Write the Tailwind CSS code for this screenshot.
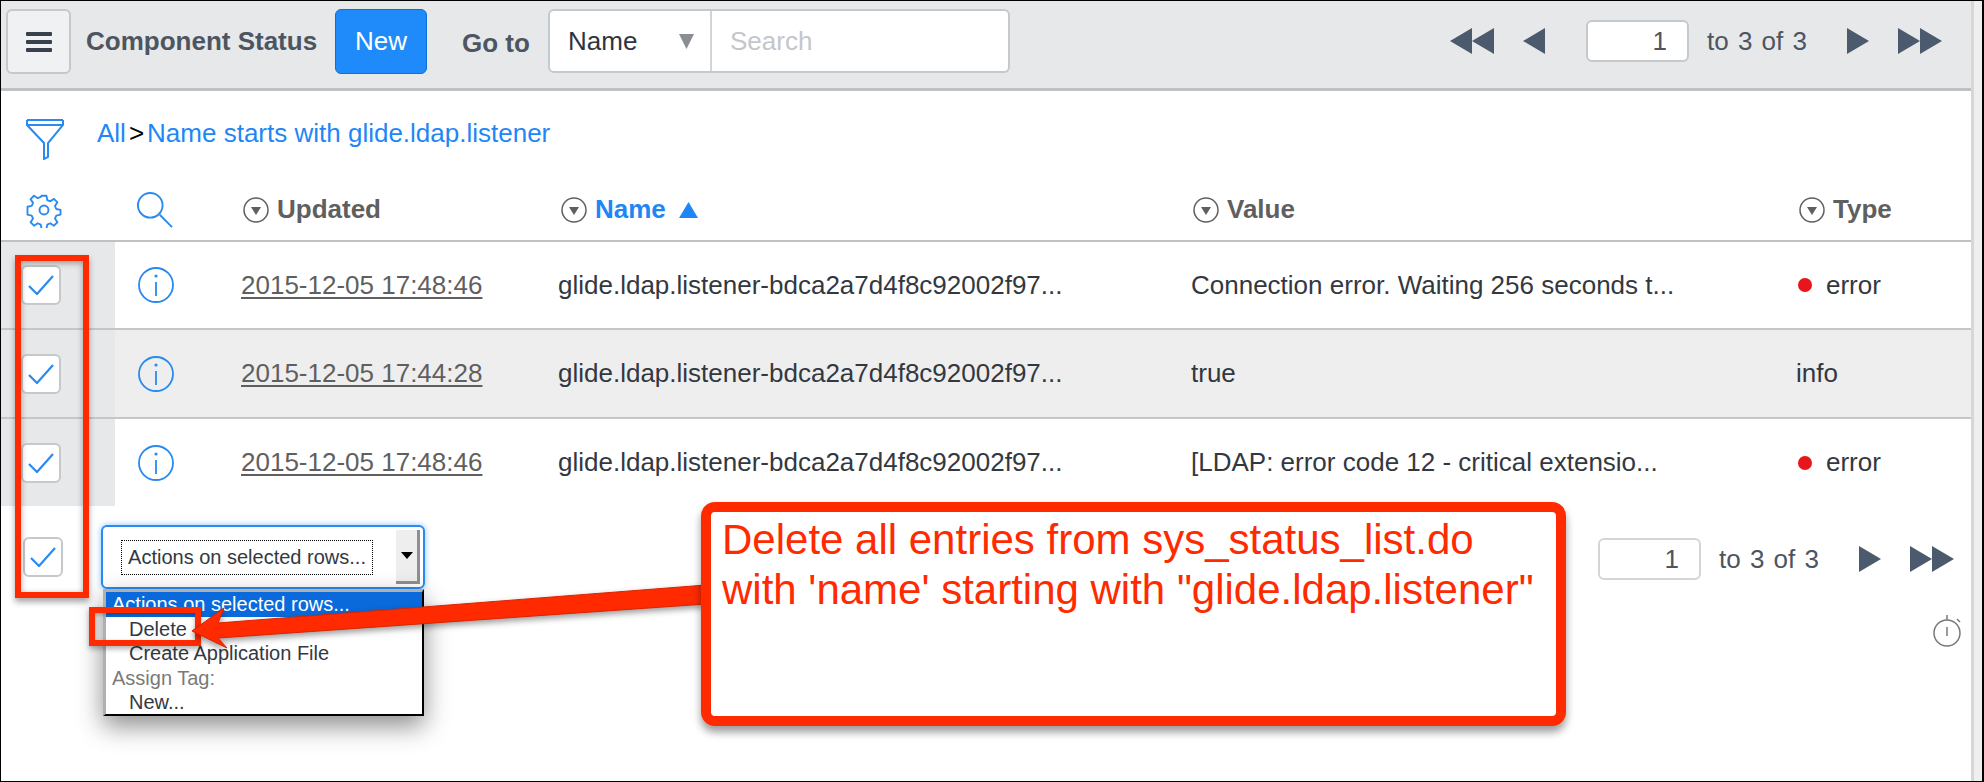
<!DOCTYPE html>
<html lang="en">
<head>
    <meta charset="UTF-8" />
    <title>Component Status</title>
    <script src="https://cdn.jsdelivr.net/npm/@tailwindcss/browser@4"></script>
</head>
<body class="bg-white font-['Liberation_Sans',Arial,sans-serif]">
<div class="relative w-[1984px] h-[782px] overflow-hidden border-t border-l border-b border-black flex">
    <main class="w-[1970px] shrink-0">
        <!-- Toolbar -->
        <header class="h-[90px] bg-[#e6e8ea] border-b-[3px] border-[#bfc2c5] flex items-start text-[#4d5561]">
            <button class="ml-[5px] mt-[8px] w-[65px] h-[65px] bg-[#f0f1f2] border-2 border-[#c6c9cc] rounded-md flex items-center justify-center">
                <svg width="26" height="20" viewBox="0 0 26 20" fill="#39414d"><rect width="26" height="4" rx="1"/><rect y="8" width="26" height="4" rx="1"/><rect y="16" width="26" height="4" rx="1"/></svg>
            </button>
            <h1 class="ml-[15px] mt-[25px] text-[26px] leading-[30px] font-bold whitespace-nowrap w-[249px]">Component Status</h1>
            <button class="mt-[8px] w-[92px] h-[65px] bg-[#1f8bfa] border border-[#0c6fd6] rounded-md text-white text-[26px]">New</button>
            <span class="ml-[35px] mt-[27px] text-[26px] leading-[30px] font-bold w-[86px]">Go to</span>
            <div class="mt-[8px] w-[462px] h-[64px] bg-white border-2 border-[#c6c9cc] rounded-md flex">
                <div class="w-[162px] flex items-center justify-between pl-[18px] pr-[16px] border-r-2 border-[#d2d4d7] text-[26px] text-[#2e3540]">
                    Name
                    <svg width="15" height="15" viewBox="0 0 15 15" fill="#8a8d91"><path d="M0 0H15L7.500 15Z"/></svg>
                </div>
                <div class="pl-[18px] flex items-center text-[26px] text-[#c3c6ca]">Search</div>
            </div>
            <div class="ml-auto flex items-center mt-[19px] mr-[29px]">
                <svg width="44" height="26" viewBox="0 0 44 26" fill="#4b5a6c"><path d="M22 0V26L0 13Z"/><path d="M44 0V26L22 13Z"/></svg>
                <svg class="ml-[29px]" width="22" height="26" viewBox="0 0 22 26" fill="#4b5a6c"><path d="M22 0V26L0 13Z"/></svg>
                <div class="ml-[41px] w-[103px] h-[42px] bg-white border-2 border-[#c6c9cc] rounded-md text-right pr-[20px] leading-[38px] text-[26px] text-[#4d5561]">1</div>
                <span class="ml-[18px] w-[140px] text-[26px] [word-spacing:2px] text-[#4d5561] whitespace-pre">to 3 of 3</span>
                <svg width="22" height="26" viewBox="0 0 22 26" fill="#4b5a6c"><path d="M0 0V26L22 13Z"/></svg>
                <svg class="ml-[29px]" width="44" height="26" viewBox="0 0 44 26" fill="#4b5a6c"><path d="M0 0V26L22 13Z"/><path d="M22 0V26L44 13Z"/></svg>
            </div>
        </header>

        <!-- Breadcrumb -->
        <div class="h-[90px] flex items-start">
            <svg class="ml-[25px] mt-[27px]" width="38" height="42" viewBox="0 0 38 42" fill="none" stroke="#2a8af0" stroke-width="2"><path d="M1 2H37M1 7H37L22 25V39L18 41V25Z"/><path d="M1 2V7M37 2V7"/></svg>
            <div class="ml-[33px] mt-[27px] text-[26px] leading-[30px] text-[#1f87f5] whitespace-nowrap">All<span class="text-black mx-[3px]">&gt;</span>Name starts with glide.ldap.listener</div>
        </div>

        <!-- Column headers -->
        <div class="h-[61px] border-b-2 border-[#bfc2c5] grid grid-cols-[114px_126px_317px_633px_605px_1fr] items-center text-[26px] font-bold text-[#5f5f5f] pb-[2px]">
            <svg class="ml-[25px]" width="36" height="36" viewBox="0 0 24 24" fill="none" stroke="#2a8af0" stroke-width="1.300" stroke-linejoin="round"><circle cx="12" cy="12" r="3"/><path d="M10.300 2h3.400l.6 3 2.100.9 2.600-1.700 2.400 2.400-1.700 2.600.9 2.100 3 .6v3.400l-3 .6-.9 2.100 1.700 2.600-2.400 2.400-2.600-1.700-2.100.9-.6 3h-3.400l-.6-3-2.100-.9-2.600 1.700-2.400-2.400 1.700-2.600-.9-2.100-3-.6V9.700l3-.6.9-2.100-1.700-2.600 2.400-2.400 2.600 1.700 2.100-.9z" transform="translate(0.600 0.600) scale(.95)"/></svg>
            <svg class="ml-[22px]" width="36" height="36" viewBox="0 0 38 38" fill="none" stroke="#2a8af0" stroke-width="2"><circle cx="14" cy="14" r="13"/><path d="M24 24L37 37"/></svg>
            <div class="flex items-center pl-[2px]">
                <svg width="26" height="26" viewBox="0 0 26 26"><circle cx="13" cy="13" r="12" fill="none" stroke="#5f5f5f" stroke-width="1.500"/><path d="M8 10H18L13 18Z" fill="#5f5f5f"/></svg>
                <span class="ml-[8px]">Updated</span>
            </div>
            <div class="flex items-center pl-[3px] text-[#1f87f5]">
                <svg width="26" height="26" viewBox="0 0 26 26"><circle cx="13" cy="13" r="12" fill="none" stroke="#5f5f5f" stroke-width="1.500"/><path d="M8 10H18L13 18Z" fill="#5f5f5f"/></svg>
                <span class="ml-[8px]">Name</span>
                <svg class="ml-[13px]" width="19" height="16" viewBox="0 0 19 16" fill="#1f87f5"><path d="M9.500 0L19 16H0Z"/></svg>
            </div>
            <div class="flex items-center pl-[2px]">
                <svg width="26" height="26" viewBox="0 0 26 26"><circle cx="13" cy="13" r="12" fill="none" stroke="#5f5f5f" stroke-width="1.500"/><path d="M8 10H18L13 18Z" fill="#5f5f5f"/></svg>
                <span class="ml-[8px]">Value</span>
            </div>
            <div class="flex items-center pl-[3px]">
                <svg width="26" height="26" viewBox="0 0 26 26"><circle cx="13" cy="13" r="12" fill="none" stroke="#5f5f5f" stroke-width="1.500"/><path d="M8 10H18L13 18Z" fill="#5f5f5f"/></svg>
                <span class="ml-[8px]">Type</span>
            </div>
        </div>

        <!-- Rows -->
        <div class="h-[88px] border-b-2 border-[#c4c6c8] grid grid-cols-[114px_126px_317px_633px_605px_1fr] items-center text-[26px] text-[#33383f]">
            <div class="h-full bg-[#e6e8ea] flex items-center pl-[20px]"><span class="w-[40px] h-[40px] bg-white border-2 border-[#c6c9cc] rounded-md flex items-center justify-center"><svg width="26" height="20" viewBox="0 0 26 20" fill="none" stroke="#2a8af0" stroke-width="2.200"><path d="M1 11L9 19L25 1"/></svg></span></div>
            <svg class="ml-[23px]" width="36" height="36" viewBox="0 0 36 36" fill="none" stroke="#2a8af0" stroke-width="1.800"><circle cx="18" cy="18" r="17"/><path d="M18 15V29"/><circle cx="18" cy="9" r="1.600" fill="#2a8af0" stroke="none"/></svg>
            <a href="#" class="underline text-[#5f5f5f] underline-offset-[3px]">2015-12-05 17:48:46</a>
            <div>glide.ldap.listener-bdca2a7d4f8c92002f97...</div>
            <div>Connection error. Waiting 256 seconds t...</div>
            <div class="flex items-center"><span class="ml-[2px] w-[14px] h-[14px] rounded-full bg-[#e8151b]"></span><span class="ml-[14px]">error</span></div>
        </div>
        <div class="h-[89px] border-b-2 border-[#c4c6c8] grid grid-cols-[114px_126px_317px_633px_605px_1fr] items-center text-[26px] text-[#33383f] bg-[#eeeeee]">
            <div class="h-full bg-[#e6e8ea] flex items-center pl-[20px]"><span class="w-[40px] h-[40px] bg-white border-2 border-[#c6c9cc] rounded-md flex items-center justify-center"><svg width="26" height="20" viewBox="0 0 26 20" fill="none" stroke="#2a8af0" stroke-width="2.200"><path d="M1 11L9 19L25 1"/></svg></span></div>
            <svg class="ml-[23px]" width="36" height="36" viewBox="0 0 36 36" fill="none" stroke="#2a8af0" stroke-width="1.800"><circle cx="18" cy="18" r="17"/><path d="M18 15V29"/><circle cx="18" cy="9" r="1.600" fill="#2a8af0" stroke="none"/></svg>
            <a href="#" class="underline text-[#5f5f5f] underline-offset-[3px]">2015-12-05 17:44:28</a>
            <div>glide.ldap.listener-bdca2a7d4f8c92002f97...</div>
            <div>true</div>
            <div>info</div>
        </div>
        <div class="h-[87px] grid grid-cols-[114px_126px_317px_633px_605px_1fr] items-center text-[26px] text-[#33383f]">
            <div class="h-full bg-[#e6e8ea] flex items-center pl-[20px]"><span class="w-[40px] h-[40px] bg-white border-2 border-[#c6c9cc] rounded-md flex items-center justify-center"><svg width="26" height="20" viewBox="0 0 26 20" fill="none" stroke="#2a8af0" stroke-width="2.200"><path d="M1 11L9 19L25 1"/></svg></span></div>
            <svg class="ml-[23px]" width="36" height="36" viewBox="0 0 36 36" fill="none" stroke="#2a8af0" stroke-width="1.800"><circle cx="18" cy="18" r="17"/><path d="M18 15V29"/><circle cx="18" cy="9" r="1.600" fill="#2a8af0" stroke="none"/></svg>
            <a href="#" class="underline text-[#5f5f5f] underline-offset-[3px]">2015-12-05 17:48:46</a>
            <div>glide.ldap.listener-bdca2a7d4f8c92002f97...</div>
            <div>[LDAP: error code 12 - critical extensio...</div>
            <div class="flex items-center"><span class="ml-[2px] w-[14px] h-[14px] rounded-full bg-[#e8151b]"></span><span class="ml-[14px]">error</span></div>
        </div>

        <!-- Footer row -->
        <div class="relative flex items-start">
            <span class="ml-[22px] mt-[31px] w-[40px] h-[40px] bg-white border-2 border-[#c6c9cc] rounded-md flex items-center justify-center"><svg width="26" height="20" viewBox="0 0 26 20" fill="none" stroke="#2a8af0" stroke-width="2.200"><path d="M1 11L9 19L25 1"/></svg></span>
            <div class="ml-[38px] mt-[19px] w-[324px] h-[64px] bg-white border-2 border-[#2a8af0] rounded-md shadow-[0_0_6px_#8cc4fa] flex items-center">
                <span class="ml-[18px] w-[252px] h-[35px] border border-dotted border-black flex items-center justify-center text-[20px] text-[#33383f] whitespace-nowrap">Actions on selected rows...</span>
                <span class="ml-[23px] w-[24px] h-[54px] bg-[#eeeeee] border-r-[3px] border-b-[3px] border-[#8f8f8f] flex items-center justify-center"><svg width="12" height="7" viewBox="0 0 12 7"><path d="M0 0H12L6 7Z"/></svg></span>
            </div>
            <div class="ml-auto mt-[32px] mr-[17px] flex items-center">
                <div class="w-[103px] h-[42px] bg-white border-2 border-[#d3d5d8] rounded-md text-right pr-[20px] leading-[38px] text-[26px] text-[#4d5561]">1</div>
                <span class="ml-[18px] w-[140px] text-[26px] [word-spacing:2px] text-[#4d5561] whitespace-pre">to 3 of 3</span>
                <svg width="22" height="26" viewBox="0 0 22 26" fill="#4b5a6c"><path d="M0 0V26L22 13Z"/></svg>
                <svg class="ml-[29px]" width="44" height="26" viewBox="0 0 44 26" fill="#4b5a6c"><path d="M0 0V26L22 13Z"/><path d="M22 0V26L44 13Z"/></svg>
            </div>

            <!-- Stopwatch -->
            <svg class="absolute left-[1932px] top-[108px]" width="30" height="34" viewBox="0 0 30 34" fill="none" stroke="#77797c" stroke-width="1.500"><circle cx="14" cy="19" r="13"/><path d="M14 1V6M14 13V22"/><path d="M24 5l3 3" /></svg>
        </div>
    </main>
    <div class="flex-1 bg-[#efefef] border-l-[3px] border-[#d6d7d8] border-r-2 border-r-black"></div>

    <!-- Select dropdown -->
    <ul class="absolute left-[102px] top-[588px] w-[321px] h-[127px] bg-white border-r-2 border-b-2 border-black border-l-[3px] border-l-[#b0b0b0] border-t-[3px] border-t-[#b0b0b0] shadow-[0_10px_24px_rgba(0,0,0,.45)] text-[20px] leading-[24.500px] text-[#33383f]">
        <li class="bg-[#0a6adb] text-white pl-[6px]">Actions on selected rows...</li>
        <li class="pl-[23px]">Delete</li>
        <li class="pl-[23px]">Create Application File</li>
        <li class="pl-[6px] text-[#7a7a7a]">Assign Tag:</li>
        <li class="pl-[23px]">New...</li>
    </ul>

    <!-- Red annotations -->
    <div class="absolute left-[14px] top-[254px] w-[74px] h-[343px] border-[6px] border-[#ff2a00] shadow-[0_4px_6px_rgba(0,0,0,.35),inset_0_2px_6px_rgba(0,0,0,.35)]"></div>
    <div class="absolute left-[88px] top-[606px] w-[112px] h-[39px] border-[6px] border-[#ff2a00] shadow-[0_3px_5px_rgba(0,0,0,.3),inset_0_2px_4px_rgba(0,0,0,.3)]"></div>
    <svg class="absolute left-[190px] top-[570px] drop-shadow-[0_3px_3px_rgba(0,0,0,.4)]" width="520" height="90" viewBox="0 0 520 90" fill="#ff2a00" stroke="#d92400"><path d="M1 60L33 37L27 52L515 14V33L27 67L36 77Z"/></svg>
    <div class="absolute left-[700px] top-[501px] w-[865px] h-[224px] bg-white border-[10px] border-[#ff2a00] rounded-[14px] shadow-[0_6px_8px_rgba(0,0,0,.4)] pl-[11px] pt-[3px] text-[42px] leading-[50px] text-[#ff2a00] whitespace-nowrap">
        Delete all entries from sys_status_list.do<br>with 'name' starting with "glide.ldap.listener"
    </div>
</div>
</body>
</html>
